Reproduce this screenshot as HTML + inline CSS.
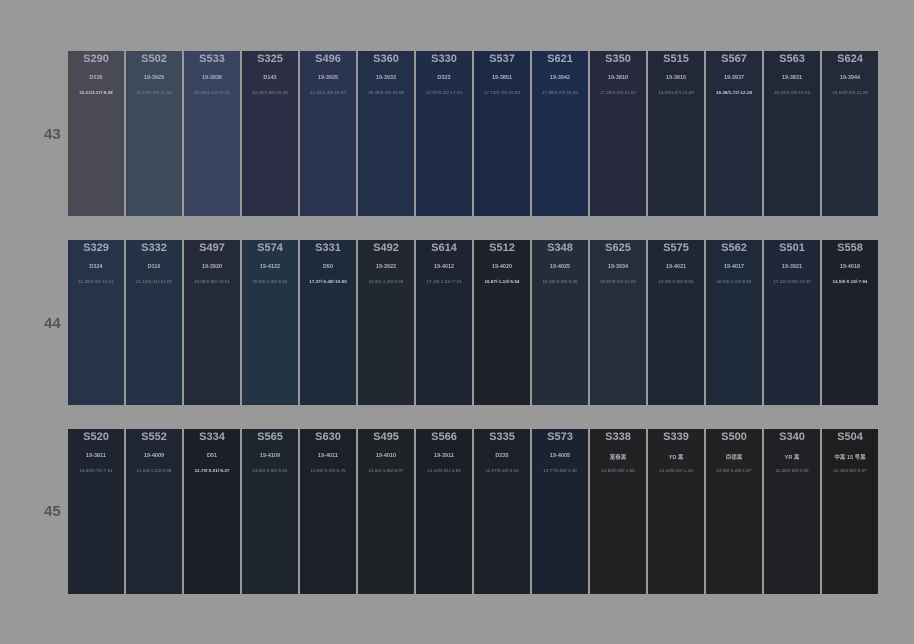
<!DOCTYPE html><html><head><meta charset="utf-8"><style>
body{margin:0;width:914px;height:644px;background:#999;position:relative;overflow:hidden;font-family:"Liberation Sans","Noto Sans CJK SC",sans-serif}
.c{position:absolute;width:56px;height:165px;text-align:center;color:#a4a8b4}
.t{position:absolute;top:2px;left:0;right:0;font-size:11px;font-weight:bold}
.k{position:absolute;top:24px;left:0;right:0;font-size:5.5px;font-weight:bold;color:#aeb2bc}
.v{position:absolute;top:39px;left:0;right:0;font-size:4.6px;color:#7d8290;white-space:nowrap}
.v.b{color:#c4c8d0;font-weight:bold}
.l{position:absolute;left:44px;font-size:15px;font-weight:bold;color:#555}
</style></head><body>
<div class="l" style="top:126px">43</div>
<div class="l" style="top:315px">44</div>
<div class="l" style="top:503px">45</div>
<div id="r"></div>
<script>
var rows=[[51,[["S290","D336","32.21/3.37/-8.08","#4a4a55",1],["S502","19-3929","31.10/0.36/-11.85","#3d4a5a"],["S533","19-3936","29.36/4.13/-18.20","#39435f"],["S325","D143","20.40/4.98/-15.26","#2c2e45"],["S496","19-3925","21.62/2.33/-15.00","#2b3450"],["S360","19-3933","19.35/2.05/-15.56","#23304a"],["S330","D323","17.87/2.12/-17.03","#1f2d48"],["S537","19-3851","17.73/2.78/-16.52","#1c2a46"],["S621","19-3942","17.89/2.70/-18.20","#1c2c4a"],["S350","19-3810","17.29/3.51/-12.87","#262a3c"],["S515","19-3815","15.93/1.87/-11.59","#222838"],["S567","19-3937","16.36/1.72/-12.28","#222a3c",1],["S563","19-3831","16.19/2.18/-10.26","#212838"],["S624","19-3944","16.64/0.63/-11.25","#232a3a"]]],
[240,[["S329","D324","21.35/0.05/-12.01","#263349"],["S332","D116","21.13/0.31/-12.03","#253145"],["S497","19-3920","18.09/0.98/-10.51","#252a3b"],["S574","19-4122","20.56/-2.60/-9.64","#233545"],["S331","D50","17.37/-0.48/-10.95","#1f2a3a",1],["S492","19-3922","16.31/-1.45/-5.69","#22282f"],["S614","19-4012","17.15/-1.31/-7.24","#1f2530"],["S512","19-4020","16.87/-1.10/-5.94","#1e2229",1],["S348","19-4025","18.48/-0.28/-9.35","#252d3b"],["S625","19-3934","19.67/0.23/-10.83","#262e3e"],["S575","19-4021","15.95/-0.55/-8.84","#1f2733"],["S562","19-4017","18.34/-1.04/-9.94","#1e2a3a"],["S501","19-3921","17.13/-0.83/-10.40","#1e2838"],["S558","19-4018","14.50/-0.19/-7.94","#1e212c",1]]],
[429,[["S520","19-3811","15.30/0.70/-7.61","#1e2430"],["S552","19-4009","14.53/-1.23/-6.98","#1f2632"],["S334","D51","12.70/-0.01/-5.27","#1b1f27",1],["S565","19-4109","13.52/-0.60/-5.96","#1d252e"],["S630","19-4011","13.06/-0.29/-5.76","#1c2027"],["S495","19-4010","14.62/-1.95/-5.07","#1d2326"],["S566","19-3911","13.10/0.51/-4.83","#1c1f26"],["S335","D235","11.57/0.18/-4.04","#1d2029"],["S573","19-4005","12.77/0.05/-4.40","#1c2330"],["S338","富春黑","12.80/0.29/-1.56","#222224"],["S339","YD 黑","12.44/0.42/-1.18","#222224"],["S500","尚德黑","12.86/-0.29/-1.97","#222223"],["S340","YR 黑","11.35/0.55/-0.95","#202124"],["S504","中黑 15 号黑","11.45/0.55/-0.67","#1e1e1e"]]]];
var h="";rows.forEach(function(r){r[1].forEach(function(c,i){h+='<div class="c" style="top:'+r[0]+'px;left:'+(68+i*58)+'px;background:'+c[3]+'"><div class="t">'+c[0]+'</div><div class="k">'+c[1]+'</div><div class="v'+(c[4]?' b':'')+'">'+c[2]+'</div></div>';});});
document.getElementById("r").innerHTML=h;
</script>
</body></html>
